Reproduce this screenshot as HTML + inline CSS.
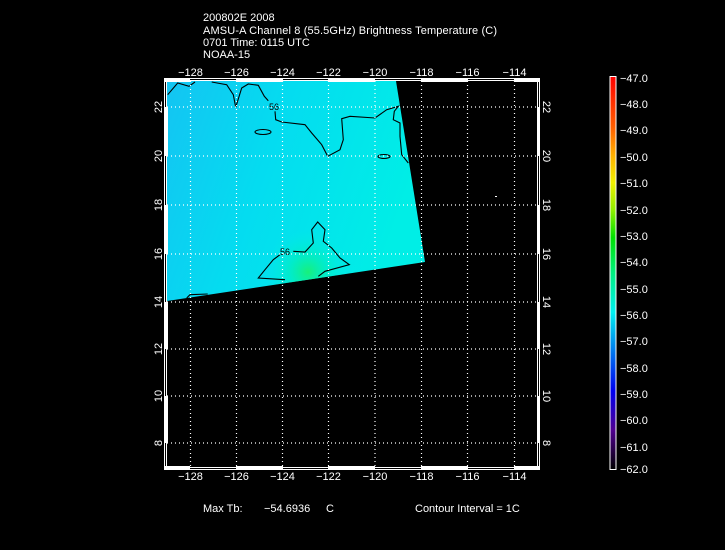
<!DOCTYPE html>
<html><head><style>
html,body{margin:0;padding:0;background:#000;}
body{width:725px;height:550px;position:relative;overflow:hidden;font-family:"Liberation Sans",sans-serif;}
</style></head><body>
<svg width="725" height="550" xmlns="http://www.w3.org/2000/svg" style="position:absolute;left:0;top:0">
<defs>
<linearGradient id="sw" x1="0" y1="0" x2="1" y2="0.3">
<stop offset="0" stop-color="#14c4f2"/><stop offset="0.45" stop-color="#04dcf0"/><stop offset="1" stop-color="#00eee6"/>
</linearGradient>
<radialGradient id="gr" cx="308" cy="272" r="42" gradientUnits="userSpaceOnUse">
<stop offset="0" stop-color="#18f07a"/><stop offset="0.45" stop-color="#00f0b8" stop-opacity="0.6"/><stop offset="1" stop-color="#00f0e0" stop-opacity="0"/>
</radialGradient>
<linearGradient id="cb" x1="0" y1="0" x2="0" y2="1">
<stop offset="0" stop-color="#ff0000"/><stop offset="0.13" stop-color="#ff6000"/><stop offset="0.2" stop-color="#ffb000"/><stop offset="0.27" stop-color="#f0f000"/><stop offset="0.34" stop-color="#90f000"/><stop offset="0.41" stop-color="#00e000"/><stop offset="0.5" stop-color="#00f080"/><stop offset="0.6" stop-color="#00f0f0"/><stop offset="0.68" stop-color="#0090f0"/><stop offset="0.8" stop-color="#0000f0"/><stop offset="0.9" stop-color="#500090"/><stop offset="1" stop-color="#000000"/>
</linearGradient>
</defs>
<g fill="#fff" font-size="11" font-family="Liberation Sans, sans-serif">
<text x="203" y="21">200802E 2008</text>
<text x="203" y="34" textLength="294">AMSU-A Channel 8 (55.5GHz) Brightness Temperature (C)</text>
<text x="203" y="46">0701 Time: 0115 UTC</text>
<text x="203" y="58">NOAA-15</text>
</g>
<polygon points="167,81 396,81 425,262 167,301" fill="url(#sw)"/>
<polygon points="167,81 396,81 425,262 167,301" fill="url(#gr)"/>
<g fill="none" stroke="#000" stroke-width="1.1">
<polyline points="167.7,94.7 177.7,83 189,86.3 195,82"/>
<polyline points="211.7,82 226.7,84.7 233.3,94.7 235.7,107.3 241.7,88 248.3,84 258.3,85.3 264.3,96.3 268.3,100.7"/>
<polyline points="275,111.3 275.7,119.7 281.7,122 305,124.7 311.7,133 321.7,144.7 327.7,156.3 340,149.7 343.3,139.7 341.7,118.7 350,116.3 375,118 386.7,109.7 398.3,106.3 394.3,111.3 393.3,119.7 400,123 400,136.3 401.7,154.7 408.3,163"/>
<ellipse cx="263" cy="132" rx="8" ry="2.5"/>
<ellipse cx="384" cy="156.5" rx="6" ry="2"/>
<polyline points="285,279.7 258.3,278 265,269.7 273.3,259.7 280,254.7"/>
<polyline points="293.3,251.3 305,252 313.3,243 311.7,229.7 317.7,222 325,229.7 323.3,241.3 331.7,248 340,258 349.3,264.7 325,271.3 318.3,276.3"/>
<polyline points="186.7,298 190,294.7 207.7,294"/>
</g>
<g fill="#000" font-size="9"><text x="269" y="110">56</text><text x="280" y="255">56</text></g>
<g stroke="#fff" stroke-width="1.2" stroke-dasharray="1,3">
<line x1="190.5" y1="81" x2="190.5" y2="466"/><line x1="236.5" y1="81" x2="236.5" y2="466"/><line x1="282.5" y1="81" x2="282.5" y2="466"/><line x1="328.5" y1="81" x2="328.5" y2="466"/><line x1="375" y1="81" x2="375" y2="466"/><line x1="421.5" y1="81" x2="421.5" y2="466"/><line x1="467.5" y1="81" x2="467.5" y2="466"/><line x1="514.5" y1="81" x2="514.5" y2="466"/>
<line x1="167" y1="107" x2="537" y2="107"/><line x1="167" y1="156" x2="537" y2="156"/><line x1="167" y1="205" x2="537" y2="205"/><line x1="167" y1="254" x2="537" y2="254"/><line x1="167" y1="302" x2="537" y2="302"/><line x1="167" y1="349" x2="537" y2="349"/><line x1="167" y1="396" x2="537" y2="396"/><line x1="167" y1="443" x2="537" y2="443"/>
</g>
<rect x="495" y="196" width="2" height="1" fill="#fff"/>
<g fill="none" stroke="#fff" stroke-width="1">
<rect x="164.5" y="78.5" width="375" height="391"/>
<rect x="166.5" y="80.5" width="371" height="387"/>
</g>
<g fill="#fff">
<rect x="165" y="79" width="25" height="3"/><rect x="236" y="79" width="47" height="3"/><rect x="328" y="79" width="47" height="3"/><rect x="421" y="79" width="47" height="3"/><rect x="514" y="79" width="25" height="3"/>
<rect x="165" y="466" width="25" height="3"/><rect x="236" y="466" width="47" height="3"/><rect x="328" y="466" width="47" height="3"/><rect x="421" y="466" width="47" height="3"/><rect x="514" y="466" width="25" height="3"/>
<rect x="165" y="107" width="3" height="49"/><rect x="165" y="205" width="3" height="49"/><rect x="165" y="302" width="3" height="47"/><rect x="165" y="396" width="3" height="47"/>
<rect x="537" y="107" width="3" height="49"/><rect x="537" y="205" width="3" height="49"/><rect x="537" y="302" width="3" height="47"/><rect x="537" y="396" width="3" height="47"/>
</g>
<g fill="#fff" font-size="11" text-anchor="middle">
<text x="190.5" y="76">−128</text><text x="236.5" y="76">−126</text><text x="282.5" y="76">−124</text><text x="328.5" y="76">−122</text><text x="375" y="76">−120</text><text x="421.5" y="76">−118</text><text x="467.5" y="76">−116</text><text x="514.5" y="76">−114</text>
<text x="190.5" y="480">−128</text><text x="236.5" y="480">−126</text><text x="282.5" y="480">−124</text><text x="328.5" y="480">−122</text><text x="375" y="480">−120</text><text x="421.5" y="480">−118</text><text x="467.5" y="480">−116</text><text x="514.5" y="480">−114</text>
<text transform="translate(162,107) rotate(-90)">22</text><text transform="translate(162,156) rotate(-90)">20</text><text transform="translate(162,205) rotate(-90)">18</text><text transform="translate(162,254) rotate(-90)">16</text><text transform="translate(162,302) rotate(-90)">14</text><text transform="translate(162,349) rotate(-90)">12</text><text transform="translate(162,396) rotate(-90)">10</text><text transform="translate(162,443) rotate(-90)">8</text>
<text transform="translate(543,107) rotate(90)">22</text><text transform="translate(543,156) rotate(90)">20</text><text transform="translate(543,205) rotate(90)">18</text><text transform="translate(543,254) rotate(90)">16</text><text transform="translate(543,302) rotate(90)">14</text><text transform="translate(543,349) rotate(90)">12</text><text transform="translate(543,396) rotate(90)">10</text><text transform="translate(543,443) rotate(90)">8</text>
</g>
<rect x="610" y="76.5" width="6" height="393" fill="url(#cb)" stroke="#fff" stroke-width="1"/>
<g fill="#fff" font-size="11">
<text x="620" y="82">−47.0</text><text x="620" y="108">−48.0</text><text x="620" y="134">−49.0</text><text x="620" y="161">−50.0</text><text x="620" y="187">−51.0</text><text x="620" y="214">−52.0</text><text x="620" y="240">−53.0</text><text x="620" y="266">−54.0</text><text x="620" y="293">−55.0</text><text x="620" y="319">−56.0</text><text x="620" y="345">−57.0</text><text x="620" y="372">−58.0</text><text x="620" y="398">−59.0</text><text x="620" y="424">−60.0</text><text x="620" y="451">−61.0</text><text x="620" y="473">−62.0</text>
<text x="203" y="512">Max Tb:</text><text x="264" y="512">−54.6936</text><text x="326" y="512">C</text>
<text x="415" y="512">Contour Interval = 1C</text>
</g>
</svg>
</body></html>
